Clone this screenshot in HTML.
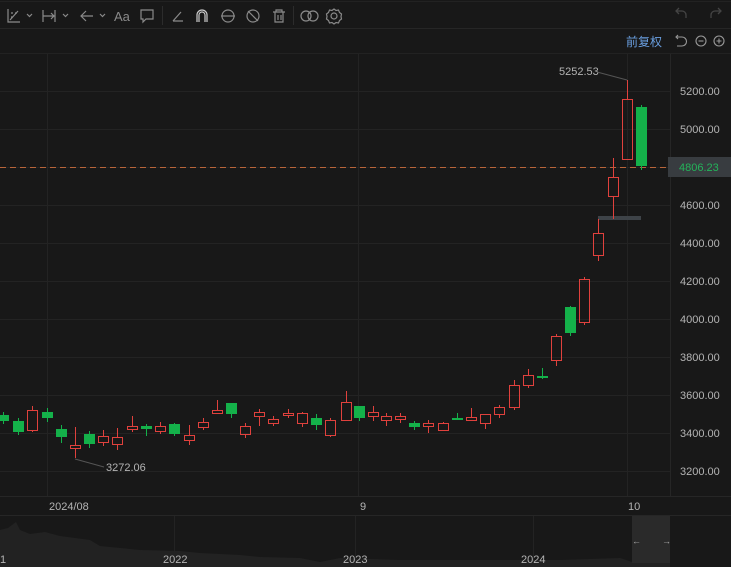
<!DOCTYPE html>
<html><head><meta charset="utf-8"><style>
html,body{margin:0;padding:0;background:#181818;width:731px;height:567px;overflow:hidden;font-family:"Liberation Sans","Noto Sans CJK SC",sans-serif}
svg{position:absolute;left:0;top:0}
</style></head><body>
<svg id="s" width="731" height="567" viewBox="0 0 731 567" xmlns="http://www.w3.org/2000/svg">
<rect width="731" height="567" fill="#181818"/>
<line x1="0" y1="1.5" x2="731" y2="1.5" stroke="#222" />
<line x1="0" y1="28.5" x2="731" y2="28.5" stroke="#262626"/>
<line x1="0" y1="53.5" x2="731" y2="53.5" stroke="#222"/>
<g stroke="#8a8a8a" fill="none" stroke-width="1.2">
 <path d="M8 9v13h12M10 20l8-9M11 13h2M15 13h2M11 17h2"/>
 <path d="M27 14l2.5 2.5L32 14"/>
 <path d="M43 10v12M43 16h12M55 10v12M51 13l3 3-3 3"/>
 <path d="M63 14l2.5 2.5L68 14"/>
 <path d="M81 16h12M86 11l-5 5 5 5"/>
 <path d="M100 14l2.5 2.5L105 14"/>
 <path d="M141 10h12v9h-7l-3 3v-3h-2z"/>
 <path d="M173 21l8-9M173 21h10"/>
 <path d="M197 22v-7a5 5 0 0 1 10 0v7M199 22v-7a3 3 0 0 1 6 0v7" stroke="#ccc"/>
 <circle cx="228" cy="16" r="6"/><path d="M221 16h14"/>
 <circle cx="253" cy="16" r="6"/><path d="M248 11l10 10"/>
 <path d="M273 12h12M276 12v-2h6v2M275 12v10h8v-10M278 15v5M281 15v5"/>
 <circle cx="306" cy="16" r="5"/><circle cx="313" cy="16" r="5"/>
 <circle cx="334" cy="16" r="3"/><path d="M334 9l2 1.5 2.5-.5 1 2.5 2 1.5-.5 2.5.5 2.5-2 1.5-1 2.5-2.5-.5-2 1.5-2-1.5-2.5.5-1-2.5-2-1.5.5-2.5-.5-2.5 2-1.5 1-2.5 2.5.5z"/>
</g>
<text x="114" y="21" fill="#8a8a8a" font-size="13">Aa</text>
<line x1="162.5" y1="6" x2="162.5" y2="25" stroke="#2c2c2c"/>
<line x1="293.5" y1="6" x2="293.5" y2="25" stroke="#2c2c2c"/>
<g stroke="#444" fill="none" stroke-width="1.3">
 <path d="M686 18v-3a4 4 0 0 0-4-4h-6M679 8l-3 3 3 3"/>
 <path d="M711 18v-3a4 4 0 0 1 4-4h6M718 8l3 3-3 3"/>
</g>
<text x="626" y="46" fill="#6a9fe0" font-size="12">前复权</text>
<g stroke="#999" fill="none" stroke-width="1.1">
 <path d="M677 37h5a4 4 0 0 1 0 9h-5"/><path d="M678 35l-2 2 2 2" />
 <circle cx="701" cy="41" r="5"/><path d="M698.5 41h5"/>
 <circle cx="719" cy="41" r="5"/><path d="M716.5 41h5M719 38.5v5"/>
</g>
<g stroke="#232323" stroke-width="1" id="grid"></g>
<line x1="670.5" y1="54" x2="670.5" y2="496" stroke="#262626"/>
<line x1="0" y1="496.5" x2="731" y2="496.5" stroke="#262626"/>
<line x1="0" y1="515.5" x2="731" y2="515.5" stroke="#262626"/>
<g id="axis" fill="#b4b4b4" font-size="11"></g>
<line x1="0" y1="167.5" x2="668" y2="167.5" stroke="#b8653a" stroke-dasharray="6,4" stroke-width="1"/>
<rect x="668" y="157" width="63" height="20" fill="#383c40"/>
<text x="679" y="171" fill="#24b35a" font-size="11">4806.23</text>
<rect x="598" y="216" width="43" height="4" fill="#3e4348"/>
<g id="c"></g>
<text x="559" y="75" fill="#b4b4b4" font-size="11">5252.53</text>
<line x1="597" y1="72" x2="627" y2="80" stroke="#555"/>
<text x="106" y="471" fill="#b4b4b4" font-size="11">3272.06</text>
<line x1="75" y1="459" x2="104" y2="467" stroke="#555"/>
<g fill="#b4b4b4" font-size="11">
<text x="49" y="510">2024/08</text><text x="360" y="510">9</text><text x="628" y="510">10</text>
</g>
<path d="M0 530 L8 528 L16 522 L20 530 L30 534 L45 532 L60 536 L90 540 L100 546 L140 550 L180 551 L200 553 L240 555 L260 557 L300 558 L320 562 L340 558 L400 560 L500 560 L560 560 L620 558 L632 562 L670 560 L670 567 L0 567Z" fill="#222"/>
<g stroke="#232323"><line x1="174.5" y1="516" x2="174.5" y2="567"/><line x1="355.5" y1="516" x2="355.5" y2="567"/><line x1="533.5" y1="516" x2="533.5" y2="567"/></g>
<rect x="632" y="516" width="38" height="47" fill="#2a2a2a"/>
<text x="632" y="544" fill="#aaa" font-size="9">←</text><text x="662" y="544" fill="#aaa" font-size="9">→</text>
<g fill="#b4b4b4" font-size="11"><text x="0" y="563">1</text><text x="163" y="563">2022</text><text x="343" y="563">2023</text><text x="521" y="563">2024</text></g>
</svg>
<script>
var ns="http://www.w3.org/2000/svg",g=document.getElementById('grid'),ax=document.getElementById('axis'),c=document.getElementById('c');
function el(p,t,a,txt){var e=document.createElementNS(ns,t);for(var k in a)e.setAttribute(k,a[k]);if(txt)e.textContent=txt;p.appendChild(e);return e;}
for(var i=0;i<11;i++){var p=5200-i*200,y=91+i*38;el(g,'line',{x1:0,x2:670,y1:y+.5,y2:y+.5});if(i!=2)el(ax,'text',{x:680,y:y+4},p.toFixed(2));}
el(g,'line',{x1:47.5,x2:47.5,y1:54,y2:496});el(g,'line',{x1:358.5,x2:358.5,y1:54,y2:496});el(g,'line',{x1:627.5,x2:627.5,y1:54,y2:496});
var d=[[3,'g',415,421,412,424],[18,'g',421,432,418,435],[32,'r',410,430,406,432],[47,'g',412,418,408,422],[61,'g',429,437,425,443],[75,'r',445,448,427,458],[89,'g',434,444,431,448],[103,'r',436,442,430,446],[117,'r',437,444,428,450],[132,'r',426,429,416,432],[146,'g',426,429,424,436],[160,'r',426,431,422,434],[174,'g',424,434,423,436],[189,'r',435,440,425,445],[203,'r',422,427,418,430],[217,'r',410,413,400,413],[231,'g',403,414,403,418],[245,'r',426,434,423,438],[259,'r',412,416,409,426],[273,'r',419,423,416,426],[288,'r',413,415,409,418],[302,'r',413,423,412,427],[316,'g',418,425,414,430],[330,'r',420,435,418,437],[346,'r',402,420,391,421],[359,'g',406,418,406,421],[373,'r',412,416,406,421],[386,'r',416,420,413,426],[400,'r',416,419,413,423],[414,'g',423,427,421,430],[428,'r',423,426,420,433],[443,'r',423,430,422,431],[457,'g',418,420,413,420],[471,'r',417,420,408,421],[485,'r',414,423,414,429],[499,'r',407,414,405,418],[514,'r',385,407,380,410],[528,'r',375,385,369,388],[542,'g',376,378,368,379],[556,'r',336,360,334,366],[570,'g',307,333,306,336],[584,'r',279,322,277,325],[598,'r',233,255,219,261],[613,'r',177,196,158,219],[627,'r',99,159,80,160],[641,'g',107,166,105,170]];
d.forEach(function(k){var x=k[0],col=k[1]=='r'?'#e0413d':'#14b14a';
if(k[1]=='r'){el(c,'line',{x1:x+.5,x2:x+.5,y1:k[4],y2:k[2],stroke:col});el(c,'line',{x1:x+.5,x2:x+.5,y1:k[3],y2:k[5],stroke:col});el(c,'rect',{x:x-4.5,y:k[2]+.5,width:10,height:Math.max(k[3]-k[2],1),fill:'none',stroke:col});}
else{el(c,'line',{x1:x+.5,x2:x+.5,y1:k[4],y2:k[5],stroke:col});el(c,'rect',{x:x-5,y:k[2],width:11,height:Math.max(k[3]-k[2],2),fill:col});}});
</script>
</body></html>
